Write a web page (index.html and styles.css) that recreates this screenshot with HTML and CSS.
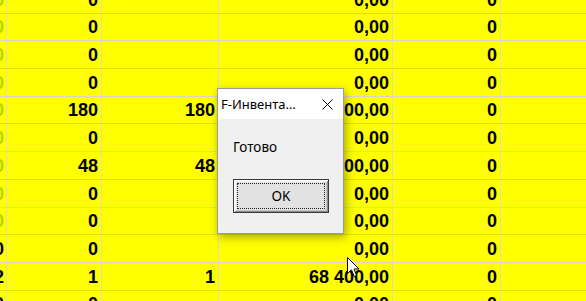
FILE: index.html
```html
<!DOCTYPE html>
<html lang="ru">
<head>
    <meta charset="UTF-8">
    <link rel="stylesheet" href="styles.css">
    <title>F-Инвентаризация</title>
</head>
<body>
    <!-- Sheet -->
    <div class="sheet">
        <div class="row y"><div class="cell edge green">0</div><div class="cell">0</div><div class="cell"></div><div class="cell">0,00</div><div class="cell">0</div><div class="cell last"></div></div>
        <div class="row g"><div class="cell edge green">0</div><div class="cell">0</div><div class="cell"></div><div class="cell">0,00</div><div class="cell">0</div><div class="cell last"></div></div>
        <div class="row y"><div class="cell edge green">0</div><div class="cell">0</div><div class="cell"></div><div class="cell">0,00</div><div class="cell">0</div><div class="cell last"></div></div>
        <div class="row g"><div class="cell edge green">0</div><div class="cell">0</div><div class="cell"></div><div class="cell">0,00</div><div class="cell">0</div><div class="cell last"></div></div>
        <div class="row y"><div class="cell edge green">0</div><div class="cell">180</div><div class="cell">180</div><div class="cell">12 600,00</div><div class="cell">0</div><div class="cell last"></div></div>
        <div class="row g"><div class="cell edge green">0</div><div class="cell">0</div><div class="cell"></div><div class="cell">0,00</div><div class="cell">0</div><div class="cell last"></div></div>
        <div class="row y"><div class="cell edge green">0</div><div class="cell">48</div><div class="cell">48</div><div class="cell">3 600,00</div><div class="cell">0</div><div class="cell last"></div></div>
        <div class="row g"><div class="cell edge green">0</div><div class="cell">0</div><div class="cell"></div><div class="cell">0,00</div><div class="cell">0</div><div class="cell last"></div></div>
        <div class="row y"><div class="cell edge green">0</div><div class="cell">0</div><div class="cell"></div><div class="cell">0,00</div><div class="cell">0</div><div class="cell last"></div></div>
        <div class="row g"><div class="cell edge">10</div><div class="cell">0</div><div class="cell"></div><div class="cell">0,00</div><div class="cell">0</div><div class="cell last"></div></div>
        <div class="row y"><div class="cell edge">12</div><div class="cell">1</div><div class="cell">1</div><div class="cell">68 400,00</div><div class="cell">0</div><div class="cell last"></div></div>
        <div class="row g"><div class="cell edge">10</div><div class="cell">0</div><div class="cell"></div><div class="cell">0,00</div><div class="cell">0</div><div class="cell last"></div></div>
    </div>

    <!-- Message box -->
    <div class="dialog">
        <div class="dialog-title">
            <span>F-Инвента…</span>
            <svg class="close" width="11" height="11" viewBox="0 0 11 11">
                <path d="M0.5 0.5 L10.5 10.5 M10.5 0.5 L0.5 10.5" stroke="#000" stroke-width="1" fill="none"/>
            </svg>
        </div>
        <div class="dialog-body">
            <p class="message">Готово</p>
            <button class="ok">OK</button>
        </div>
    </div>

    <!-- Mouse pointer -->
    <svg class="pointer" width="13" height="21" viewBox="0 0 13 21">
        <path d="M0.5 0.5 L0.5 16.5 L4.5 12.8 L7.2 19.5 L9.6 18.5 L7 12 L12 12 Z" fill="#fff" stroke="#000" stroke-width="1" stroke-linejoin="round"/>
    </svg>
</body>
</html>
```

FILE: styles.css
```css
body {
    margin: 0;
    background-color: #ffff00;
    overflow: hidden;
    font-family: "Liberation Sans", Arial, sans-serif;
}

.sheet {
    margin-top: -14px;
}

.row {
    display: grid;
    grid-template-columns: 7px 95px 117px 174px 108px 1fr;
    height: 27.7px;
    box-sizing: border-box;
    border-bottom: 1px solid #d4d4d4;
}

.row.y {
    border-bottom-color: #e2e200;
}

.row.g {
    border-bottom-color: #d6d6d0;
}

.cell {
    display: flex;
    justify-content: flex-end;
    align-items: flex-end;
    padding: 0 3px 3px 0;
    border-right: 1px solid #dedcb0;
    font-size: 18px;
    font-weight: bold;
    line-height: 20px;
    color: #000;
    white-space: nowrap;
    overflow: hidden;
}

.cell.edge {
    padding-right: 2px;
}

.cell.green {
    color: #b4d400;
}

.cell.last {
    border-right: none;
}

.dialog {
    position: absolute;
    left: 217px;
    top: 88px;
    width: 127px;
    height: 146px;
    box-sizing: border-box;
    border: 1px solid #9b9b9b;
    background-color: #f0f0f0;
    box-shadow: 2px 3px 9px rgba(0, 0, 0, 0.35);
    font-family: "Noto Sans", "Liberation Sans", sans-serif;
    color: #000;
}

.dialog-title {
    height: 30px;
    background-color: #fff;
    display: flex;
    align-items: center;
    justify-content: space-between;
    padding: 0 10px 0 3px;
    font-size: 13px;
}

.close {
    display: block;
}

.dialog-body {
    padding: 20px 0 0 15px;
}

.message {
    margin: 0;
    font-size: 13.5px;
    line-height: 17px;
}

.ok {
    display: block;
    margin-top: 23px;
    width: 96px;
    height: 34px;
    border: 1px solid #3a3a3a;
    background-color: #e1e1e1;
    box-shadow: inset 1px 1px #ffffff, inset -1px -1px #8c8c8c, inset 2px 2px #f4f4f4, inset -2px -2px #c4c4c4;
    outline: 1px dotted #222;
    outline-offset: -5px;
    font-family: "Noto Sans", "Liberation Sans", sans-serif;
    font-size: 13.5px;
    color: #000;
    padding: 0;
}

.pointer {
    position: absolute;
    left: 347px;
    top: 257px;
}
```
